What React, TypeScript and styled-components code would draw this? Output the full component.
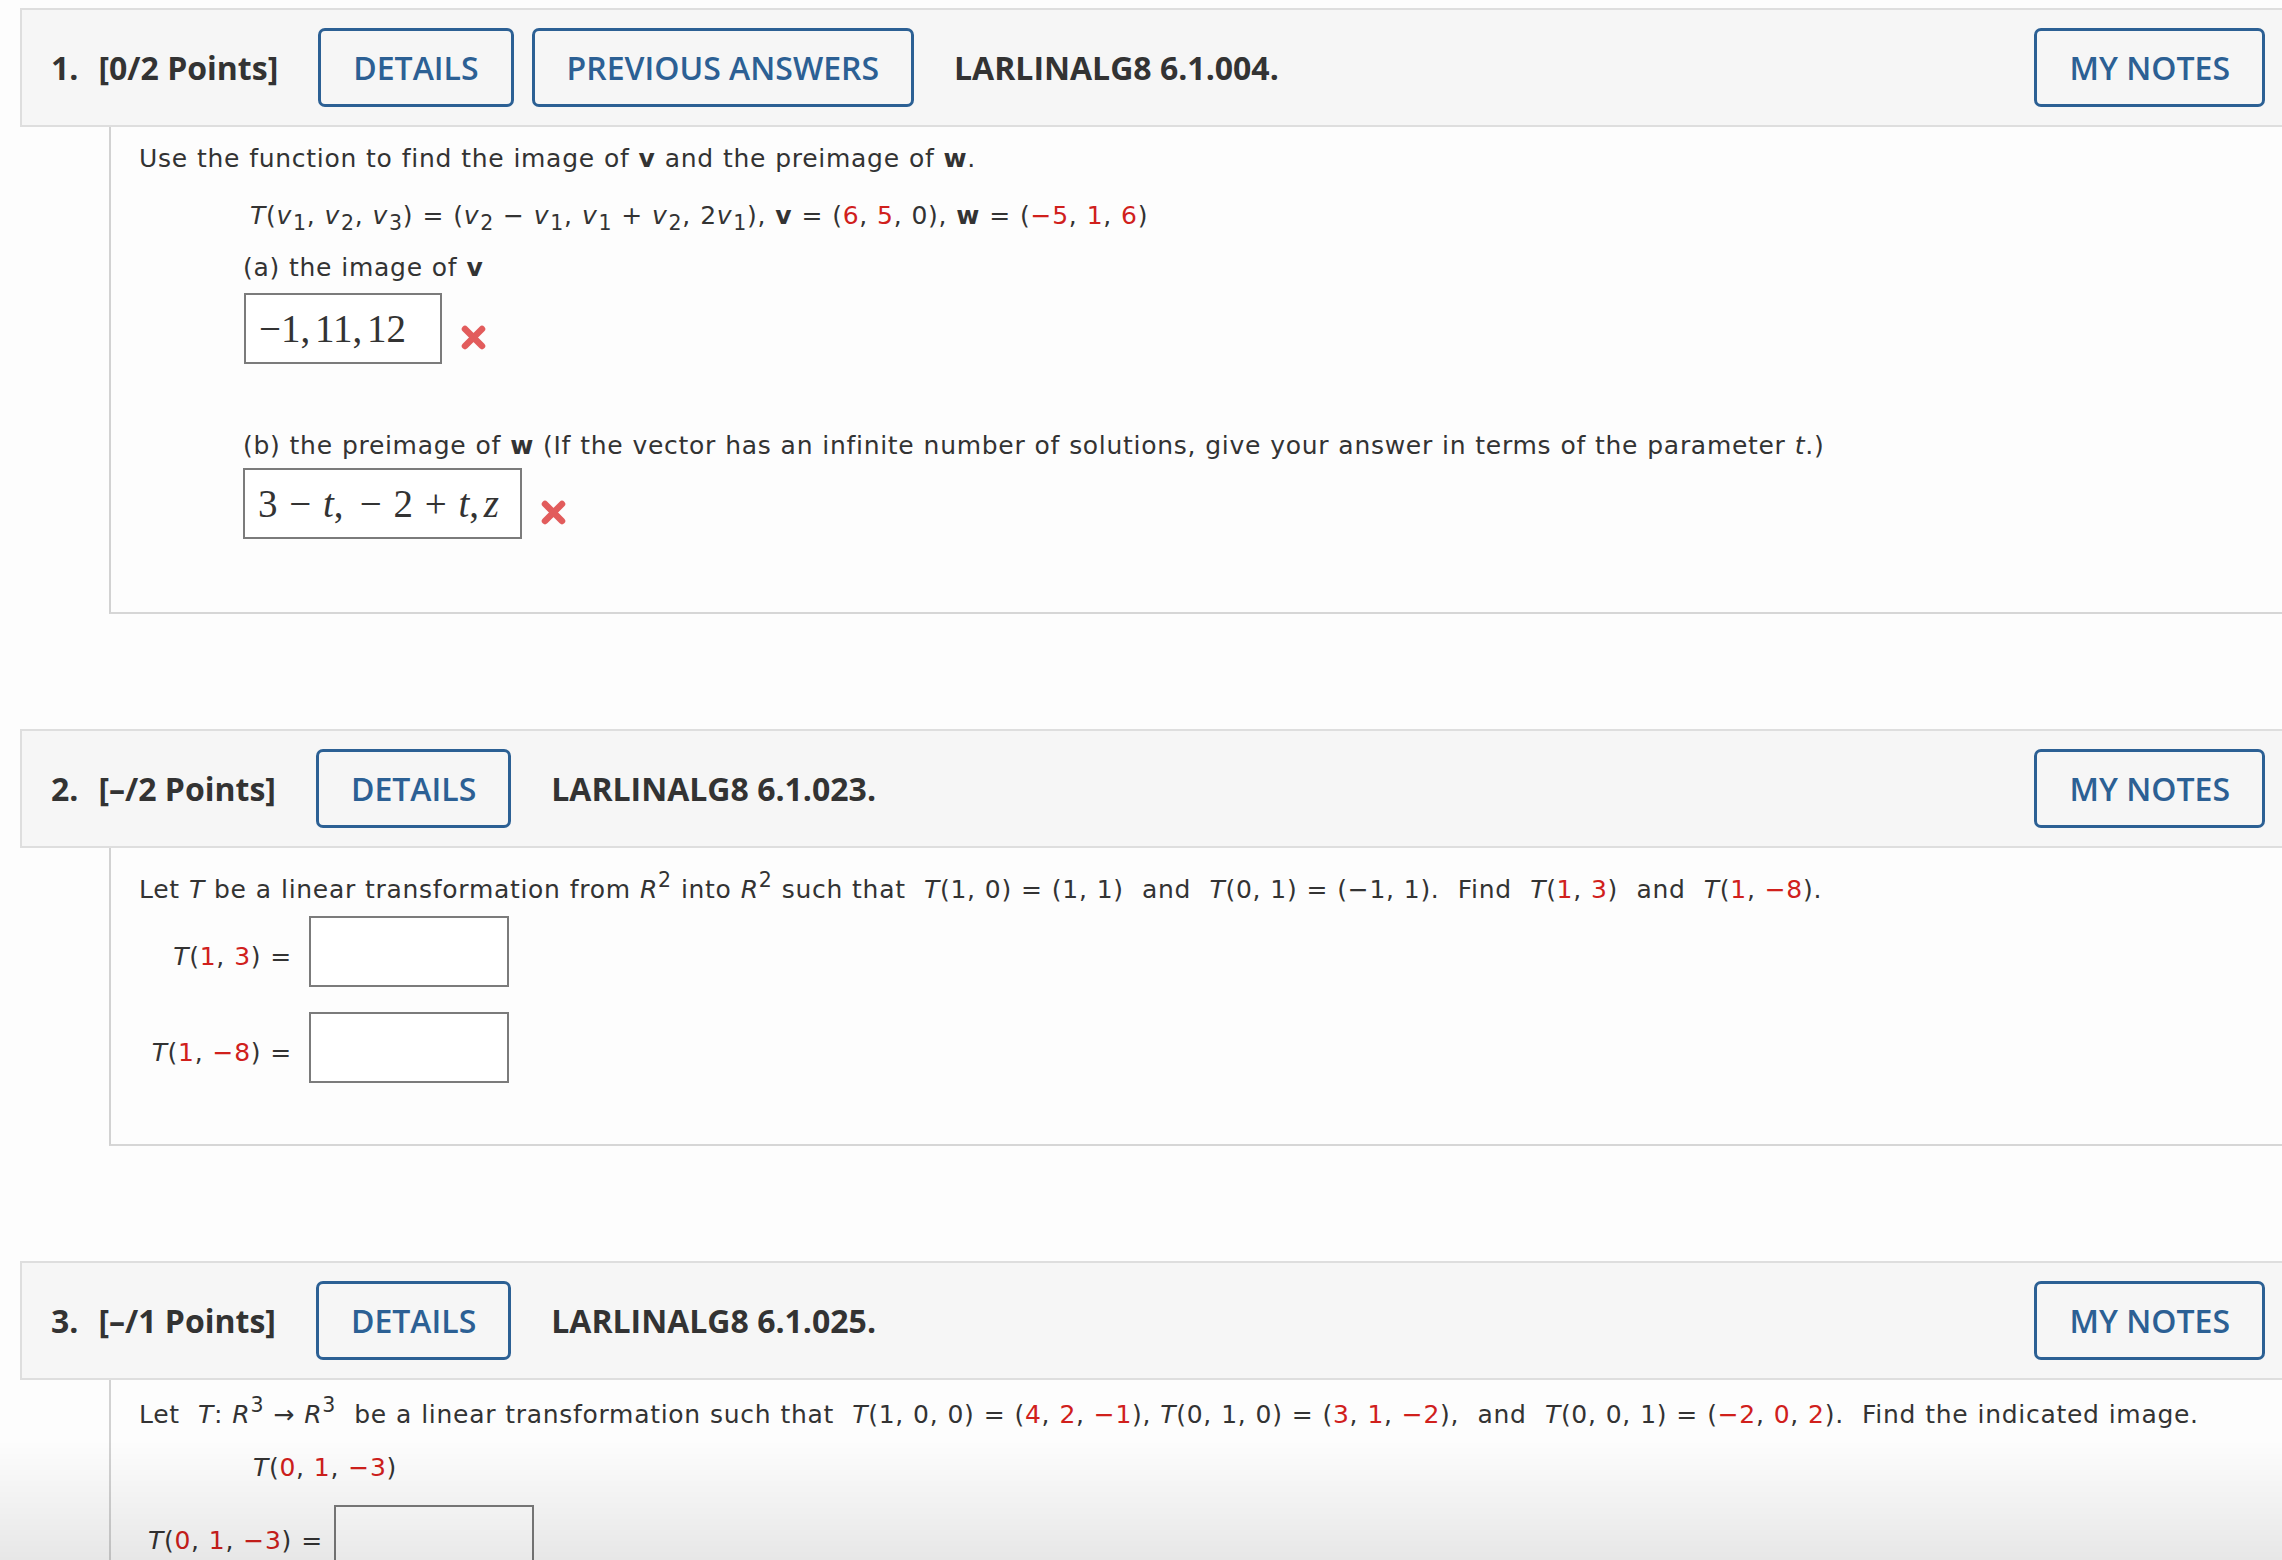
import React from "react";
import styled, { createGlobalStyle } from "styled-components";

const GlobalStyle = createGlobalStyle`
  html, body {
    margin: 0;
    padding: 0;
    background: #fdfdfd;
    overflow: hidden;
  }
`;

const Page = styled.div`
  padding: 8px 0 0 20px;
  height: 1560px;
  box-sizing: border-box;
`;

const Question = styled.section<{ $gap?: number }>`
  margin-bottom: ${(p) => p.$gap ?? 0}px;
`;

const Header = styled.div`
  display: flex;
  align-items: center;
  background: #f6f6f6;
  border: 2px solid #dedede;
  border-right: none;
  padding: 18px 17px 18px 29px;
  font-family: "Open Sans", "Liberation Sans", sans-serif;
  font-size: 32px;
  color: #333;
  gap: 18px;
`;

const Num = styled.span`
  font-weight: 700;
  margin-right: 2px;
`;

const Points = styled.span`
  font-weight: 700;
  margin-right: 22px;
`;

const Button = styled.button<{ $right?: boolean }>`
  height: 79px;
  box-sizing: border-box;
  border: 3px solid #2c6094;
  border-radius: 7px;
  background: transparent;
  color: #2c6094;
  font-family: "Open Sans", "Liberation Sans", sans-serif;
  font-size: 32px;
  font-weight: 600;
  padding: 0 32px;
  margin-left: ${(p) => (p.$right ? "auto" : "0")};
`;

const Code = styled.span`
  font-weight: 700;
  margin-left: 22px;
`;

const Body = styled.div<{ $pt: number; $pb: number }>`
  margin-left: 89px;
  border-left: 2px solid #d2d2d2;
  border-bottom: 2px solid #d6d6d6;
  padding: ${(p) => p.$pt}px 0 ${(p) => p.$pb}px 28px;
  font-family: "DejaVu Sans", Verdana, sans-serif;
  font-size: 25px;
  letter-spacing: 0.7px;
  word-spacing: 0.5px;
  line-height: 33px;
  color: #333;
`;

const Line = styled.div<{ $indent?: number; $mt?: number }>`
  margin-left: ${(p) => p.$indent ?? 0}px;
  margin-top: ${(p) => p.$mt ?? 0}px;
  white-space: pre;
`;

const I = styled.i`
  font-style: italic;
`;

const B = styled.b`
  font-weight: 700;
`;

const Red = styled.span`
  color: #d0201c;
`;

const Sub = styled.sub`
  font-size: 0.82em;
  line-height: 0;
  vertical-align: -0.3em;
  margin-left: 1px;
`;

const Sup = styled.sup`
  font-size: 0.82em;
  line-height: 0;
  vertical-align: 0.55em;
`;

const AnswerRow = styled.div<{ $indent: number; $mt: number }>`
  display: flex;
  align-items: flex-start;
  margin-left: ${(p) => p.$indent}px;
  margin-top: ${(p) => p.$mt}px;
`;

const AnswerBox = styled.div<{ $w: number }>`
  width: ${(p) => p.$w}px;
  height: 71px;
  box-sizing: border-box;
  border: 2px solid #7b7b7b;
  display: flex;
  align-items: center;
  padding: 0 13px;
  font-family: "Liberation Serif", "Times New Roman", serif;
  font-size: 39px;
  letter-spacing: 0;
  word-spacing: 0;
  color: #333;
  white-space: pre;
  background: #fff;
`;

const Comma = styled.span`
  margin-right: 0.12em;
`;

const Op = styled.span`
  margin: 0 0.3em;
`;

const MathI = styled.i`
  font-style: italic;
`;

const WrongMark = styled.svg`
  margin-left: 18px;
  margin-top: 31px;
  flex: none;
`;

const EntryGrid = styled.div<{ $mt: number }>`
  display: grid;
  grid-template-columns: 170px 200px;
  row-gap: 25px;
  margin-top: ${(p) => p.$mt}px;
  align-items: center;
`;

const EntryLabel = styled.div`
  justify-self: end;
  padding-right: 17px;
  padding-top: 10px;
  white-space: pre;
`;

const InlineEntry = styled.div<{ $mt: number }>`
  display: flex;
  align-items: center;
  gap: 11px;
  margin-top: ${(p) => p.$mt}px;
  margin-left: 9px;
  white-space: pre;
`;

const BottomFade = styled.div`
  position: fixed;
  left: 0;
  right: 0;
  bottom: 0;
  height: 120px;
  pointer-events: none;
  background: linear-gradient(rgba(0, 0, 0, 0), rgba(0, 0, 0, 0.085));
`;

function Cross() {
  return (
    <WrongMark width="27" height="27" viewBox="0 0 27 27">
      <path
        d="M5 5 L22 22 M22 5 L5 22"
        stroke="#e25c5c"
        strokeWidth="6.5"
        strokeLinecap="round"
      />
    </WrongMark>
  );
}

function QHeader({
  num,
  points,
  buttons,
  code,
}: {
  num: number;
  points: string;
  buttons: string[];
  code: string;
}) {
  return (
    <Header>
      <Num>{num}.</Num>
      <Points>{points}</Points>
      {buttons.map((b) => (
        <Button key={b}>{b}</Button>
      ))}
      <Code>{code}</Code>
      <Button $right>MY NOTES</Button>
    </Header>
  );
}

const v = (n: number) => (
  <>
    <I>v</I>
    <Sub>{n}</Sub>
  </>
);

export default function App() {
  return (
    <>
      <GlobalStyle />
      <Page>
        <Question $gap={115}>
          <QHeader
            num={1}
            points="[0/2 Points]"
            buttons={["DETAILS", "PREVIOUS ANSWERS"]}
            code="LARLINALG8 6.1.004."
          />
          <Body $pt={15} $pb={73}>
            <Line>
              Use the function to find the image of <B>v</B> and the preimage of <B>w</B>.
            </Line>
            <Line $indent={111} $mt={24}>
              <I>T</I>({v(1)}, {v(2)}, {v(3)}) = ({v(2)} − {v(1)}, {v(1)} + {v(2)}, 2{v(1)}),{" "}
              <B>v</B> = (<Red>6</Red>, <Red>5</Red>, 0), <B>w</B> = (<Red>−5</Red>,{" "}
              <Red>1</Red>, <Red>6</Red>)
            </Line>
            <Line $indent={104} $mt={19}>
              (a) the image of <B>v</B>
            </Line>
            <AnswerRow $indent={105} $mt={9}>
              <AnswerBox $w={198}>
                −1<Comma>,</Comma>11<Comma>,</Comma>12
              </AnswerBox>
              <Cross />
            </AnswerRow>
            <Line $indent={104} $mt={65}>
              (b) the preimage of <B>w</B> (If the vector has an infinite number of solutions, give
              your answer in terms of the parameter <I>t</I>.)
            </Line>
            <AnswerRow $indent={104} $mt={6}>
              <AnswerBox $w={279}>
                3<Op>−</Op>
                <MathI>t</MathI>
                <Comma>,</Comma>
                {"   "}
                <Op>−</Op>2<Op>+</Op>
                <MathI>t</MathI>
                <Comma>,</Comma>
                <MathI>z</MathI>
              </AnswerBox>
              <Cross />
            </AnswerRow>
          </Body>
        </Question>

        <Question $gap={115}>
          <QHeader
            num={2}
            points="[–/2 Points]"
            buttons={["DETAILS"]}
            code="LARLINALG8 6.1.023."
          />
          <Body $pt={25} $pb={61}>
            <Line>
              Let <I>T</I> be a linear transformation from <I>R</I>
              <Sup>2</Sup> into <I>R</I>
              <Sup>2</Sup> such that{"  "}
              <I>T</I>(1, 0) = (1, 1){"  "}and{"  "}
              <I>T</I>(0, 1) = (−1, 1).{"  "}Find{"  "}
              <I>T</I>(<Red>1</Red>, <Red>3</Red>){"  "}and{"  "}
              <I>T</I>(<Red>1</Red>, <Red>−8</Red>).
            </Line>
            <EntryGrid $mt={10}>
              <EntryLabel>
                <I>T</I>(<Red>1</Red>, <Red>3</Red>) =
              </EntryLabel>
              <AnswerBox $w={200} />
              <EntryLabel>
                <I>T</I>(<Red>1</Red>, <Red>−8</Red>) =
              </EntryLabel>
              <AnswerBox $w={200} />
            </EntryGrid>
          </Body>
        </Question>

        <Question>
          <QHeader
            num={3}
            points="[–/1 Points]"
            buttons={["DETAILS"]}
            code="LARLINALG8 6.1.025."
          />
          <Body $pt={18} $pb={40}>
            <Line>
              Let{"  "}
              <I>T</I>: <I>R</I>
              <Sup>3</Sup> → <I>R</I>
              <Sup>3</Sup>
              {"  "}be a linear transformation such that{"  "}
              <I>T</I>(1, 0, 0) = (<Red>4</Red>, <Red>2</Red>, <Red>−1</Red>), <I>T</I>(0, 1, 0)
              = (<Red>3</Red>, <Red>1</Red>, <Red>−2</Red>),{"  "}and{"  "}
              <I>T</I>(0, 0, 1) = (<Red>−2</Red>, <Red>0</Red>, <Red>2</Red>).{"  "}Find the
              indicated image.
            </Line>
            <Line $indent={114} $mt={20}>
              <I>T</I>(<Red>0</Red>, <Red>1</Red>, <Red>−3</Red>)
            </Line>
            <InlineEntry $mt={21}>
              <span>
                <I>T</I>(<Red>0</Red>, <Red>1</Red>, <Red>−3</Red>) =
              </span>
              <AnswerBox $w={200} />
            </InlineEntry>
          </Body>
        </Question>
        <BottomFade />
      </Page>
    </>
  );
}
